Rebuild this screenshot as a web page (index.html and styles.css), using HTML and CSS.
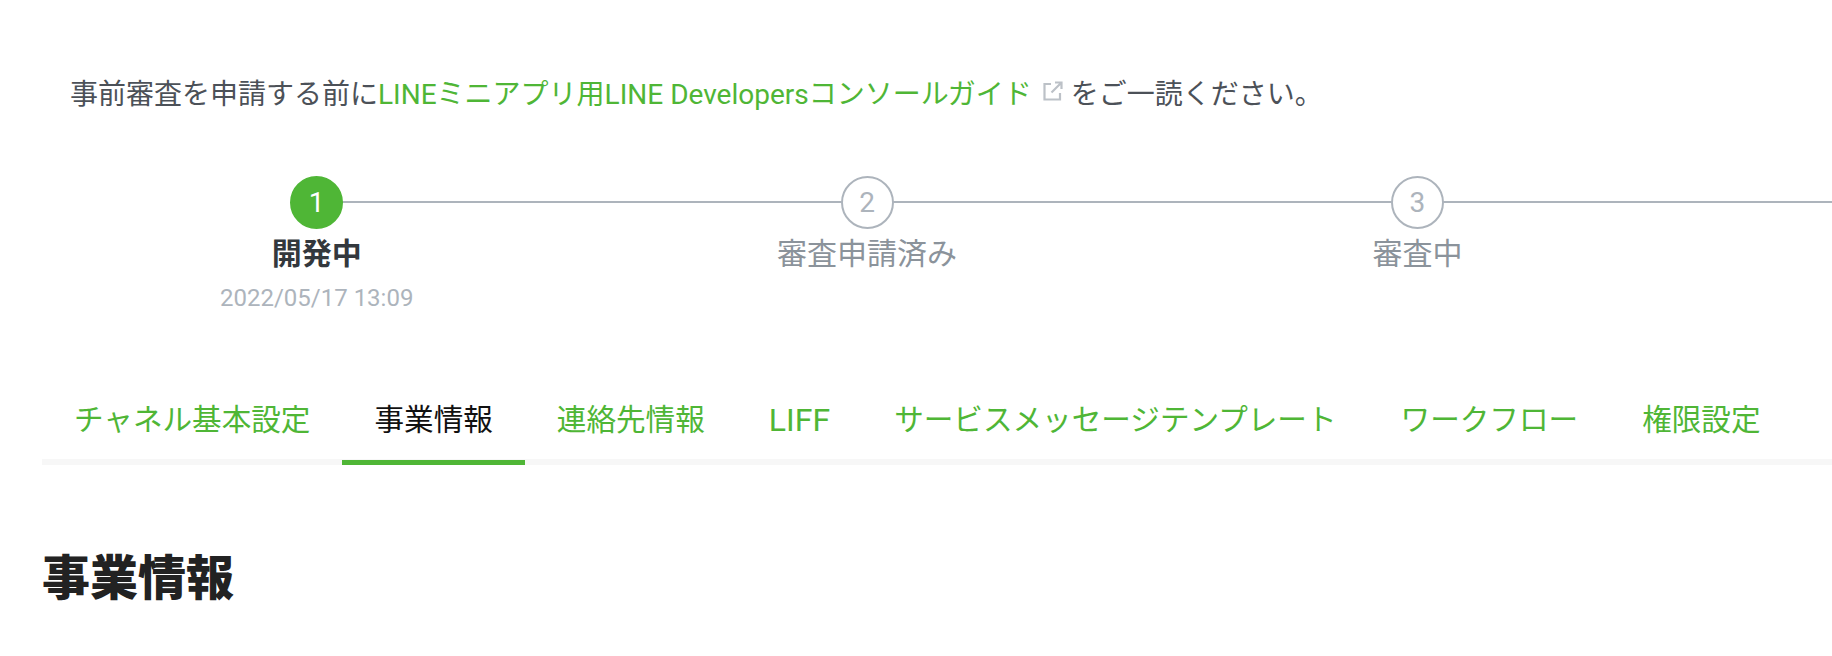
FILE: index.html
```html
<!DOCTYPE html>
<html lang="ja">
<head>
<meta charset="utf-8">
<title>事業情報</title>
<link rel="stylesheet" href="styles.css">
</head>
<body>
<main class="page">
  <p class="notice">事前審査を申請する前に<a class="link" href="#">LINEミニアプリ用LINE Developersコンソールガイド<svg class="ext" viewBox="0 0 20 20" width="20" height="20" fill="none" stroke="#bcc1c7" stroke-width="2.2"><path d="M8 3H1.5v15.5H17V12"/><path d="M12 1.5h6.5V8M18.5 1.5L8.5 11.5"/></svg></a>をご一読ください。</p>
  <ol class="steps">
    <li class="step step-current"><span class="dot">1</span><span class="step-name">開発中</span><span class="step-date">2022/05/17 13:09</span></li>
    <li class="step"><span class="dot">2</span><span class="step-name">審査申請済み</span></li>
    <li class="step"><span class="dot">3</span><span class="step-name">審査中</span></li>
  </ol>
  <nav class="tabs">
    <a class="tab" href="#">チャネル基本設定</a>
    <a class="tab tab-active" href="#">事業情報</a>
    <a class="tab" href="#">連絡先情報</a>
    <a class="tab tab-latin" href="#">LIFF</a>
    <a class="tab" href="#">サービスメッセージテンプレート</a>
    <a class="tab" href="#">ワークフロー</a>
    <a class="tab" href="#">権限設定</a>
  </nav>
  <h1 class="title">事業情報</h1>
</main>
</body>
</html>
```
FILE: styles.css
```css
* { box-sizing: border-box; }
html, body { margin: 0; padding: 0; background: #fff; overflow: hidden; }
body {
  height: 656px;
  font-family: Roboto, "Noto Sans CJK JP", "Liberation Sans", sans-serif;
}
.page { padding: 0 0 0 42px; }
.notice {
  margin: 0; padding: 77px 0 0 28px;
  font-size: 28px; line-height: 36px; color: #4c5158;
  height: 112px;
}
.link { color: #4fb636; text-decoration: none; }
.ext { vertical-align: 3px; margin: 0 8px 0 11px; }
.steps {
  list-style: none; margin: 64px 0 0 -0.5px; padding: 0;
  display: flex; overflow: hidden;
}
.step {
  flex: 0 0 550.4px; position: relative;
  display: flex; flex-direction: column; align-items: center;
  color: #8b939b;
}
.step::before {
  content: ""; position: absolute; left: 50%; width: 100%; top: 25px; height: 2px; background: #adb4bc;
}
.dot {
  position: relative; z-index: 1;
  width: 53px; height: 53px; border-radius: 50%;
  border: 2px solid #adb4bc; background: #fff; color: #adb4bc;
  display: flex; align-items: center; justify-content: center;
  font-size: 28px;
}
.step-current .dot { background: #4fb636; border-color: #4fb636; color: #fff; }
.step-name { margin-top: 7px; font-size: 30px; line-height: 36px; }
.step-current .step-name { font-weight: 700; color: #33383d; }
.step-date { margin-top: 11px; font-size: 24px; line-height: 30px; color: #adb4bc; }
.tabs {
  display: flex; margin-top: 85px;
  border-bottom: 6px solid #f7f7f7; height: 67px;
}
.tab {
  padding: 1px 32px 0; font-size: 29.6px; line-height: 42px;
  color: #4fb636; text-decoration: none; white-space: nowrap;
  height: 67px;
}
.tab-latin { font-size: 32px; }
.tab-active { color: #111; border-bottom: 5px solid #4fb636; }
.title { margin: 82px 0 0; font-size: 48px; line-height: 64px; font-weight: 900; color: #222; }
```
